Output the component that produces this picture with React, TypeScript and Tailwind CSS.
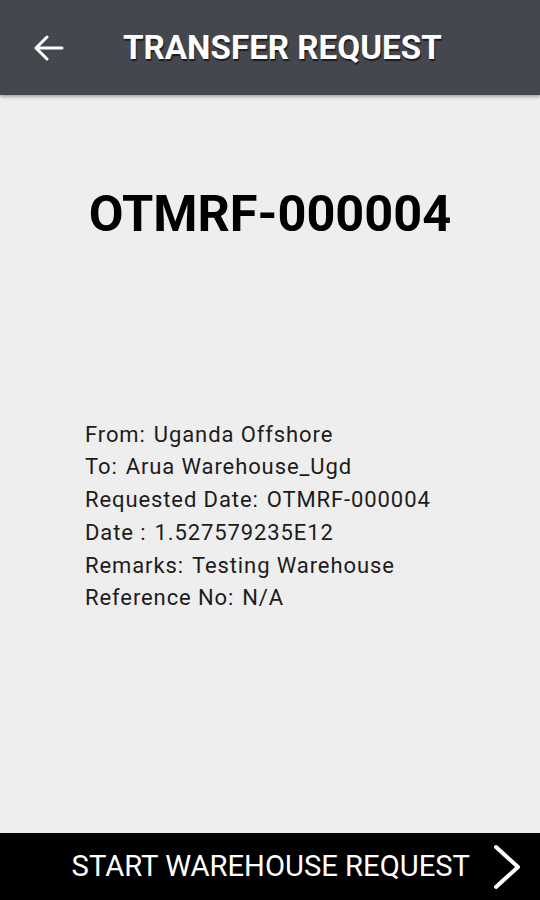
const details = [
  { label: 'From:', value: 'Uganda Offshore' },
  { label: 'To:', value: 'Arua Warehouse_Ugd' },
  { label: 'Requested Date:', value: 'OTMRF-000004' },
  { label: 'Date :', value: '1.527579235E12' },
  { label: 'Remarks:', value: 'Testing Warehouse' },
  { label: 'Reference No:', value: 'N/A' },
];

export default function App() {
  return (
    <div className="flex h-[900px] w-[540px] flex-col bg-[#eeeeee] font-['Roboto',sans-serif]">
      {/* Toolbar */}
      <div className="flex h-[95px] shrink-0 items-center bg-[#45474f] shadow-[0_2px_3px_rgba(0,0,0,0.3)]">
        <svg className="ml-[33px] h-[26px] w-[31px]" viewBox="0 0 31 26" fill="none">
          <path d="M29 13 H3 M14 2 L3 13 L14 24" stroke="white" strokeWidth="3" strokeLinecap="round" strokeLinejoin="round" />
        </svg>
        <h1 className="ml-[59px] text-[33.2px] font-bold text-white [text-shadow:1px_2px_1px_rgba(0,0,0,0.6)]">
          TRANSFER REQUEST
        </h1>
      </div>

      {/* Content */}
      <div className="flex flex-1 flex-col">
        <div className="mt-[94px] text-center text-[50.5px] font-bold leading-none text-black">
          OTMRF-000004
        </div>
        <div className="ml-[85px] mt-[179px] flex flex-col text-[22px] leading-[32.8px] tracking-[0.9px] text-[#1c1c1c]">
          {details.map((d) => (
            <div key={d.label} className="flex gap-[8px]">
              <span>{d.label}</span>
              <span>{d.value}</span>
            </div>
          ))}
        </div>
      </div>

      {/* Bottom action */}
      <div className="flex h-[67px] shrink-0 items-center justify-end bg-black">
        <span className="text-[29.2px] text-white">START WAREHOUSE REQUEST</span>
        <svg className="ml-[22px] mr-[18px] h-[46px] w-[30px]" viewBox="0 0 30 46" fill="none">
          <path d="M4 3 L26 23 L4 43" stroke="white" strokeWidth="4" strokeLinecap="round" strokeLinejoin="round" />
        </svg>
      </div>
    </div>
  );
}
